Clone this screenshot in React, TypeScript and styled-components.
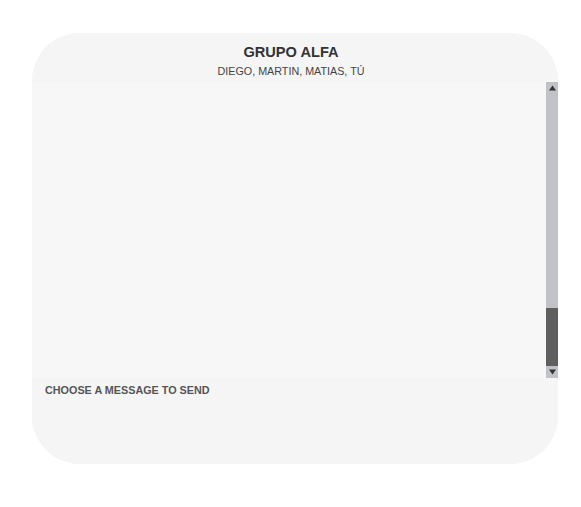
import React from "react";
import styled, { createGlobalStyle } from "styled-components";

const Global = createGlobalStyle`
  html, body { margin: 0; padding: 0; background: #ffffff; }
  body { font-family: "Liberation Sans", Arial, Helvetica, sans-serif; }
`;

const Page = styled.div`
  padding: 33px 0 0 32px;
`;

const Card = styled.div`
  width: 526px;
  height: 431px;
  border-radius: 48px;
  overflow: hidden;
  background: #f5f5f5;
  display: flex;
  flex-direction: column;
`;

const Header = styled.div`
  height: 49px;
  box-sizing: border-box;
  padding: 11px 8px 0 0;
  display: flex;
  flex-direction: column;
  align-items: center;
  background: #f5f5f5;
`;

const Title = styled.div`
  font-size: 14.6px;
  line-height: 16px;
  font-weight: 700;
  color: #333333;
`;

const Subtitle = styled.div`
  margin-top: 5px;
  font-size: 10.75px;
  line-height: 13px;
  color: #444444;
`;

const Messages = styled.div`
  height: 296px;
  display: flex;
  background: #f7f7f7;
`;

const MessageList = styled.div`
  flex: 1;
`;

const Scrollbar = styled.div`
  width: 12px;
  display: flex;
  flex-direction: column;
  background: #c1c1c8;
`;

const ArrowButton = styled.div`
  height: 12px;
  display: flex;
  align-items: center;
  justify-content: center;
`;

const Track = styled.div`
  flex: 1;
  display: flex;
  flex-direction: column;
  justify-content: flex-end;
`;

const Thumb = styled.div`
  height: 58px;
  background: #5f5f5f;
`;

const Footer = styled.div`
  flex: 1;
  padding: 6px 13px 0;
  background: #f5f5f5;
`;

const Prompt = styled.div`
  font-size: 10.8px;
  line-height: 12px;
  font-weight: 700;
  color: #555555;
`;

const Arrow = ({ up }: { up?: boolean }) => (
  <svg width="7" height="6" viewBox="0 0 7 6">
    <polygon points={up ? "3.5,0.5 7,5.5 0,5.5" : "0,0.5 7,0.5 3.5,5.5"} fill="#333333" />
  </svg>
);

export default function App() {
  return (
    <Page>
      <Global />
      <Card>
        <Header>
          <Title>GRUPO ALFA</Title>
          <Subtitle>DIEGO, MARTIN, MATIAS, TÚ</Subtitle>
        </Header>
        <Messages>
          <MessageList />
          <Scrollbar>
            <ArrowButton>
              <Arrow up />
            </ArrowButton>
            <Track>
              <Thumb />
            </Track>
            <ArrowButton>
              <Arrow />
            </ArrowButton>
          </Scrollbar>
        </Messages>
        <Footer>
          <Prompt>CHOOSE A MESSAGE TO SEND</Prompt>
        </Footer>
      </Card>
    </Page>
  );
}
